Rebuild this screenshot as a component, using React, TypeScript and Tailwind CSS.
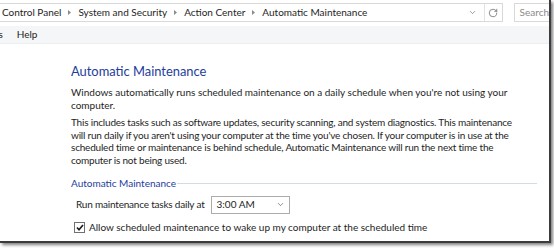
import { ChevronDown, RotateCw } from "lucide-react";

const crumbs = ["Control Panel", "System and Security", "Action Center"];

const intro = [
  "Windows automatically runs scheduled maintenance on a daily schedule when you're not using your",
  "computer.",
];

const details = [
  "This includes tasks such as software updates, security scanning, and system diagnostics. This maintenance",
  "will run daily if you aren't using your computer at the time you've chosen. If your computer is in use at the",
  "scheduled time or maintenance is behind schedule, Automatic Maintenance will run the next time the",
  "computer is not being used.",
];

const Arrow = () => (
  <svg width="3" height="5" viewBox="0 0 3 5" className="mx-[7px] shrink-0">
    <path d="M0 0 L3 2.5 L0 5 Z" fill="#8a8a8a" />
  </svg>
);

const Lines = ({ lines, className }: { lines: string[]; className: string }) => (
  <p className={className}>
    {lines.map((l) => (
      <span key={l} className="block whitespace-nowrap">
        {l}
      </span>
    ))}
  </p>
);

const App = () => {
  return (
    <div
      className="h-[248px] w-[554px] overflow-hidden bg-white text-[10px] text-[#1e1e1e]"
      style={{ fontFamily: 'Lato, "Noto Sans", sans-serif' }}
    >
      <div className="flex h-[243px] w-[551px] flex-col overflow-hidden border-b-2 border-r-2 border-[#3c3c3c] bg-white shadow-[2px_2px_3px_rgba(0,0,0,0.5)]">
        {/* address bar */}
        <div className="flex h-[26px] items-start pt-[3px]">
          <div className="flex h-[19px] w-[506px] items-center border border-l-0 border-[#d9d9d9]">
            <div className="flex flex-1 items-center pl-[2px] whitespace-nowrap">
              {crumbs.map((c) => (
                <span key={c} className="flex items-center">
                  {c}
                  <Arrow />
                </span>
              ))}
              <span>Automatic Maintenance</span>
            </div>
            <ChevronDown size={9} strokeWidth={1.5} className="mr-[7px] text-[#555]" />
            <div className="flex h-full w-[18px] items-center justify-center border-l border-[#e3e3e3]">
              <RotateCw size={10} strokeWidth={1.6} className="text-[#555]" />
            </div>
          </div>
          <div className="ml-[11px] flex h-[19px] flex-1 items-center border border-r-0 border-[#d9d9d9] pl-[5px] text-[#8a8a8a]">
            Search
          </div>
        </div>

        {/* menu bar */}
        <div className="flex h-[18px] items-center border-b border-[#eceff2] bg-[#f5f6f7]">
          <span className="-ml-[20px]">Tools</span>
          <span className="ml-[14px]">Help</span>
        </div>

        {/* content */}
        <div className="flex flex-col pl-[71px] pt-[19px]">
          <h1 className="text-[12.9px] leading-[16px] text-[#1e3c9c]">Automatic Maintenance</h1>
          <Lines lines={intro} className="mt-[7px] leading-[12.5px]" />
          <Lines lines={details} className="mt-[5px] leading-[12.5px] tracking-[-0.2px]" />

          <div className="mt-[11px] flex w-[466px] items-center">
            <span className="leading-[12.5px] text-[#1e3c9c]">Automatic Maintenance</span>
            <div className="ml-[1px] h-px flex-1 bg-[#cfdde9]" />
          </div>

          <div className="ml-[5px] mt-[6px] flex items-center">
            <span className="tracking-[-0.2px]">Run maintenance tasks daily at</span>
            <div className="ml-[6px] flex h-[18px] w-[79px] items-center justify-between border border-[#acacac] bg-white pl-[5px] pr-[4px]">
              <span>3:00 AM</span>
              <ChevronDown size={9} strokeWidth={1.6} className="text-[#444]" />
            </div>
          </div>

          <label className="ml-[3px] mt-[6px] flex items-center">
            <span className="flex h-[11px] w-[11px] items-center justify-center border border-[#707070] bg-white">
              <svg width="8" height="7" viewBox="0 0 8 7">
                <path d="M1 3.5 L3 5.7 L7 1" fill="none" stroke="#1e1e1e" strokeWidth="1.7" />
              </svg>
            </span>
            <span className="ml-[4px]">Allow scheduled maintenance to wake up my computer at the scheduled time</span>
          </label>
        </div>
      </div>
    </div>
  );
};

export default App;
